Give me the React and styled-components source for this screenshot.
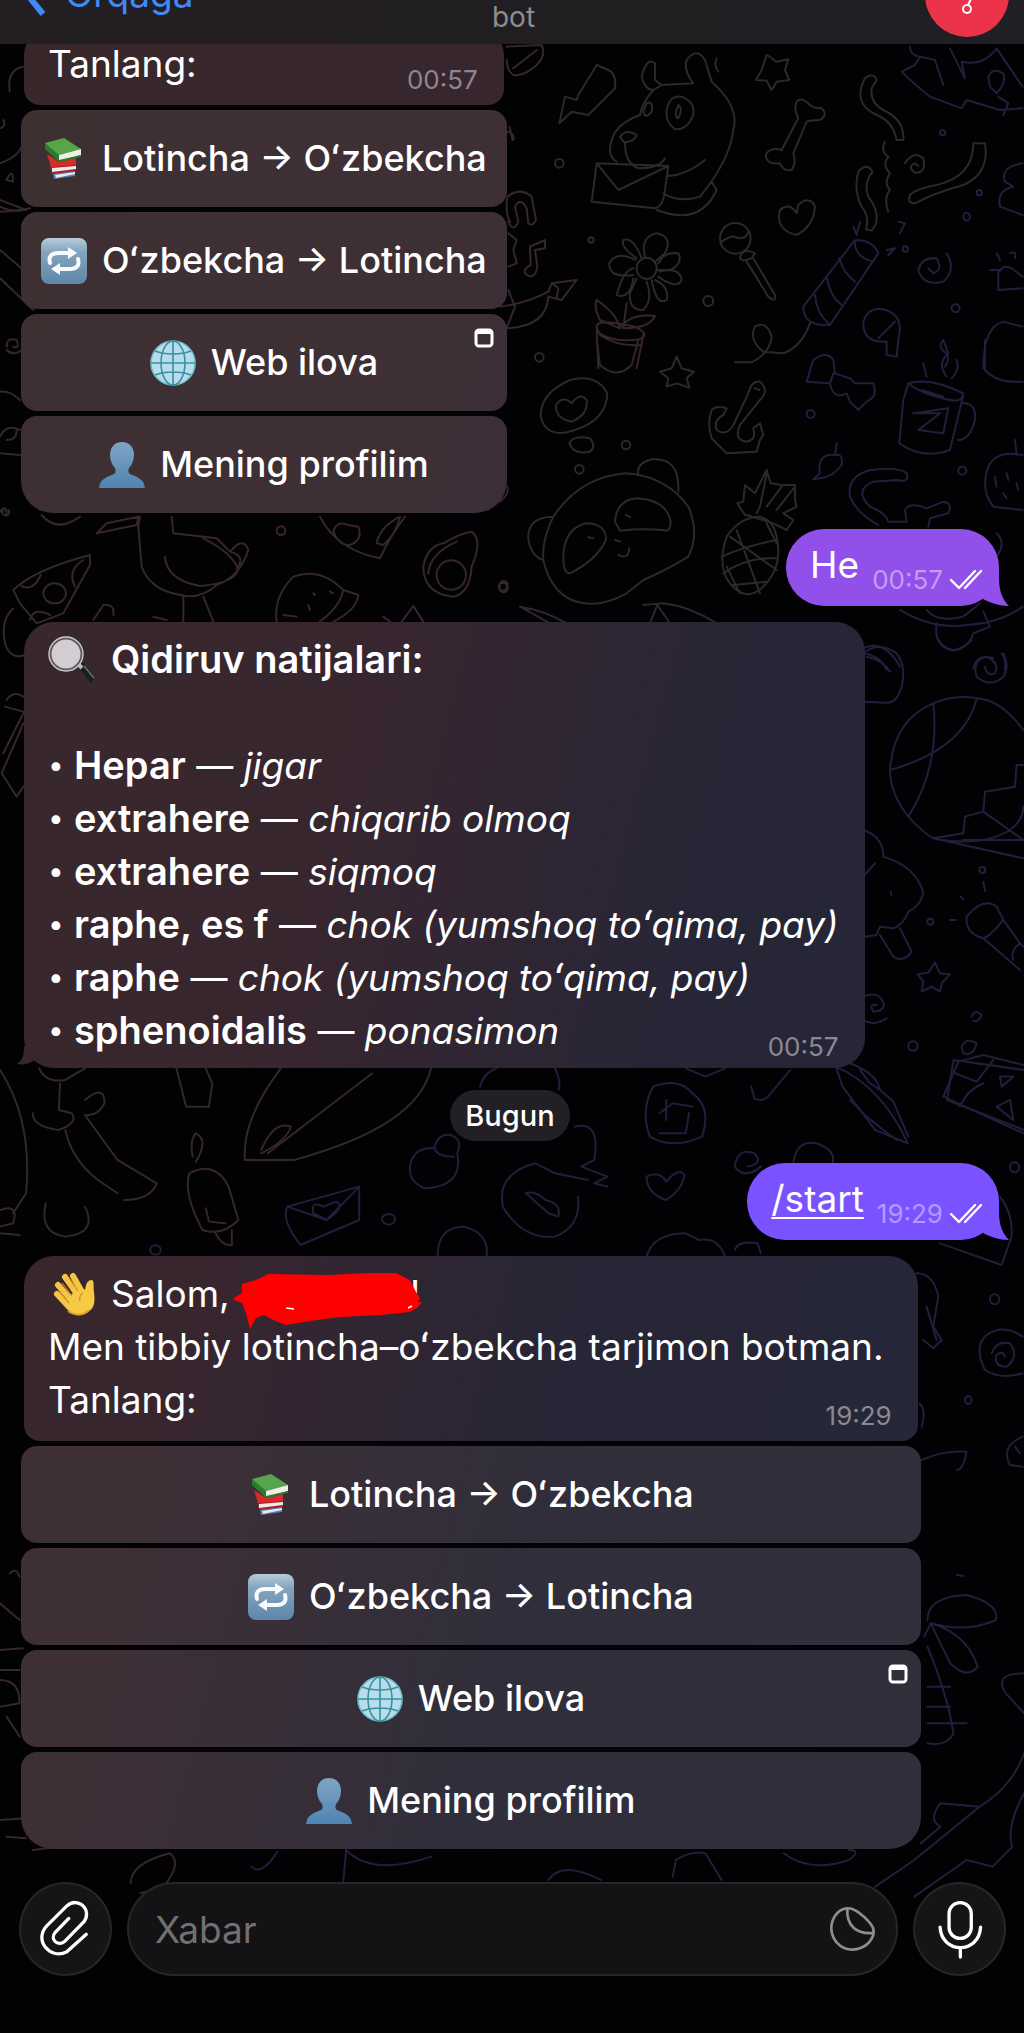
import React from "react";
import styled, { createGlobalStyle } from "styled-components";

const GlobalStyle = createGlobalStyle`
  * {
    box-sizing: border-box;
  }
  body {
    margin: 0;
    background-color: #020103;
    color: white;
    font-family: Inter, "Noto Sans", sans-serif;
    font-size: 37px;
    line-height: 53px;
  }
  button, input {
    font: inherit;
    color: inherit;
    border: none;
    padding: 0;
  }
`;

const Page = styled.div`
  position: relative;
  height: 100vh;
  display: flex;
  flex-direction: column;
  overflow: hidden;
`;

const Wallpaper = styled.svg`
  position: absolute;
  inset: 0;
  width: 100%;
  height: 100%;
  fill: none;
  stroke-width: 2;
  stroke-linecap: round;
  stroke-linejoin: round;

  path {
    vector-effect: non-scaling-stroke;
  }
`;

const Header = styled.header`
  position: relative;
  flex: none;
  height: 44px;
  padding: 0 15px 0 18px;
  display: grid;
  grid-template-columns: 1fr auto 1fr;
  grid-template-rows: 44px;
  align-items: end;
  overflow: hidden;
  background: linear-gradient(to right, #231f22, #211e21 60%, #1f1f24);
`;

const BackButton = styled.button`
  justify-self: start;
  display: flex;
  align-items: flex-end;
  gap: 17px;
  margin-bottom: 28px;
  line-height: 44px;
  background: none;
  color: #3f8af7;
  cursor: pointer;
`;

const Subtitle = styled.span`
  margin-bottom: 9px;
  font-size: 28px;
  line-height: 36px;
  color: #8f8d90;
`;

const Avatar = styled.button`
  justify-self: end;
  width: 84px;
  height: 84px;
  margin-bottom: 7px;
  border-radius: 50%;
  background-color: #ec3349;
  cursor: pointer;
`;

const Chat = styled.main`
  position: relative;
  flex: 1;
  min-height: 0;
  padding: 0 25px 33px 21px;
  display: flex;
  flex-direction: column;
  justify-content: flex-end;
  align-items: flex-start;
  gap: 16px;
  overflow: hidden;
`;

const Group = styled.section`
  flex: none;
  min-width: ${(props) => (props.$wide ? "92%" : "0")};
  display: flex;
  flex-direction: column;
  gap: 5px;
`;

const Bubble = styled.div`
  position: relative;
  margin: 0 3px;
  padding: ${(props) => (props.$attached ? "11px 26px 15px 24px" : "11px 26px 11px 24px")};
  border-radius: ${(props) => (props.$attached ? "30px 30px 16px 16px" : "30px")};
  background: linear-gradient(105deg, #38282a, #38262f 35%, #272536 60%, #24283a)
    fixed;
`;

const Line = styled.p`
  margin: 0;
  min-height: 53px;
  display: flex;
  align-items: center;
  gap: 15px;
  white-space: pre;
`;

const Title = styled(Line)`
  font-size: 38px;
  font-weight: 600;
`;

const LastLine = styled.div`
  display: flex;
  gap: 24px;
`;

const Time = styled.time`
  align-self: flex-end;
  margin: 0 0 -8px auto;
  font-size: 26px;
  line-height: 36px;
  color: #8d8792;
`;

const Results = styled.ul`
  margin: 53px 0 0;
  padding: 0;
  list-style: none;

  li {
    display: flex;
    gap: 12px;
    white-space: nowrap;
  }
  b {
    font-size: 38px;
    font-weight: 600;
  }
`;

const Dot = styled.span`
  width: 14px;
  font-size: 28px;
  text-align: center;
`;

const Redacted = styled.span`
  position: relative;
  display: inline-block;
  width: 180px;
  height: 36px;

  svg {
    position: absolute;
    left: 4px;
    top: 1px;
  }
`;

const KeyButton = styled.button`
  position: relative;
  height: 97px;
  padding: 0 20px;
  display: flex;
  align-items: center;
  justify-content: center;
  gap: 15px;
  border-radius: 16px;
  font-size: 36px;
  font-weight: 500;
  white-space: nowrap;
  background: linear-gradient(105deg, #3d3030, #3e2f36 35%, #302e3b 60%, #302f3a)
    fixed;
  cursor: pointer;

  &:last-child {
    border-radius: 16px 16px 32px 32px;
  }
`;

const WebBadge = styled.svg`
  position: absolute;
  top: 14px;
  right: 13px;
`;

const Outgoing = styled.div`
  position: relative;
  flex: none;
  align-self: flex-end;
  height: 77px;
  padding: 9px 14px 0 24px;
  display: flex;
  align-items: flex-start;
  gap: 13px;
  border-radius: 38px;
  background-color: ${(props) => props.$color};

  a {
    color: white;
    text-decoration-thickness: 2px;
    text-underline-offset: 5px;
  }
`;

const Receipt = styled.span`
  display: flex;
  align-items: center;
  gap: 6px;
  margin-top: 24px;
  line-height: 36px;

  time {
    margin: 0;
    color: ${(props) => props.$color};
  }
`;

const Tail = styled.svg`
  position: absolute;
  right: -10px;
  bottom: 0;
`;

const LeftTail = styled.svg`
  position: absolute;
  left: -7px;
  bottom: 0;
`;

const DatePill = styled.div`
  flex: none;
  align-self: center;
  margin: 6px 0;
  padding: 0 15px;
  border-radius: 26px;
  font-size: 29px;
  font-weight: 500;
  line-height: 51px;
  background-color: #232025;
`;

const Composer = styled.form`
  position: relative;
  flex: none;
  display: flex;
  gap: 15px;
  padding: 0 18px 57px 19px;
`;

const RoundButton = styled.button`
  flex: none;
  width: 93px;
  height: 94px;
  display: grid;
  place-items: center;
  border: 2px solid #262527;
  border-radius: 50%;
  background-color: #151416;
  cursor: pointer;
`;

const Field = styled.div`
  flex: 1;
  height: 94px;
  padding: 0 18px 0 26px;
  display: flex;
  align-items: center;
  border: 2px solid #262527;
  border-radius: 47px;
  background-color: #131214;
`;

const Input = styled.input`
  flex: 1;
  min-width: 0;
  background: none;
  outline: none;

  &::placeholder {
    color: #727073;
    opacity: 1;
  }
`;

const StickerButton = styled.button`
  display: grid;
  background: none;
  cursor: pointer;
`;

const LEFT = "#35262d";
const MIDDLE = "#2c282c";
const RIGHT = "#211f3b";

// Wallpaper doodles, grouped by the patch of the canvas they are drawn on.
const doodles = [
  {
    color: LEFT,
    at: "translate(500 40) scale(.3333)",
    d: `M20 20L125 15Q140 45 110 75Q70 110 40 105Q20 90 20 60M40 85L110 30
      M40 300Q45 280 22 275M25 545Q40 580 55 545L45 500Q60 470 80 505L85 550Q100 560 108 540L95 470Q60 440 22 470Q15 520 30 545
      M80 705Q105 720 112 680L105 630L135 625L135 600L90 620L92 675Q65 690 80 705M25 580L50 600L40 630L50 670L25 680
      M0 800Q80 790 145 755L155 730L230 720L185 780L145 770Q140 860 20 865L45 800L25 750M155 730L175 745L170 775
      M290 780Q280 800 300 840L360 865Q350 820 290 780M360 865Q390 820 465 828Q450 865 370 865L380 790
      M290 860Q290 840 350 850Q430 860 433 885Q430 905 360 900Q290 890 290 860L295 985M430 885L410 985M300 885Q350 920 425 915`,
  },
  {
    color: MIDDLE,
    at: "translate(500 40) scale(.3333)",
    d: `M290 75L235 165L230 180L195 170L178 250L215 215L265 225L345 145Q350 100 325 90Z
      M485 135L465 120L465 70Q440 50 425 110Q435 150 460 150L485 135L580 130Q550 90 560 60Q590 20 615 60L635 125Q720 200 700 270Q690 360 600 470Q540 490 490 460
      M460 150Q425 190 420 225Q350 250 335 300Q320 350 350 365M360 290Q380 265 410 285Q400 310 370 305ZM375 310Q375 370 415 385Q480 385 495 355
      M440 190Q460 180 455 215Q435 240 430 215ZM500 210Q510 160 550 172Q590 190 578 230Q560 270 525 268Q495 245 500 210ZM535 195Q550 205 535 235Q520 230 535 195
      M290 370L505 378L495 450Q490 500 465 505L275 485ZM290 370L355 450L505 378M505 408Q560 405 615 360M470 510Q600 560 650 450L635 425
      M650 55Q640 75 655 95M800 45L810 50L828 65L865 58L855 90L868 120L830 125L815 150L800 122L768 120L785 90Z
      M165 370a13 13 0 1 0 26 0a13 13 0 1 0-26 0M890 185Q900 170 925 190Q935 205 965 205Q985 225 960 240Q930 240 920 245L880 340Q890 370 875 390Q850 395 840 370Q800 375 797 345Q810 320 845 330L895 235Q880 205 890 185Z
      M1095 115Q1120 95 1130 120L1115 145Q1110 190 1150 210Q1215 240 1210 300L1190 300Q1180 245 1130 225Q1055 190 1095 115Z
      M1075 395Q1100 365 1118 395Q1090 430 1105 470Q1150 530 1115 572L1098 568Q1110 530 1085 500Q1060 450 1075 395Z
      M1155 305Q1140 335 1165 350Q1145 375 1170 400Q1150 430 1170 450Q1150 475 1165 515
      M1215 370Q1240 330 1270 355Q1280 400 1245 398Q1220 380 1245 370L1255 378M1420 310L1455 310Q1470 400 1390 435Q1300 460 1245 490Q1220 490 1230 465Q1250 445 1310 435Q1420 410 1420 310Z
      M890 520Q870 485 840 510Q825 570 890 585Q940 560 945 500Q930 465 895 495Z
      M660 595a46 46 0 1 0 92 0a46 46 0 1 0-92 0M665 605Q700 580 715 595Q740 595 745 575M720 655Q720 635 745 632L765 640L755 655L730 662ZM740 665L805 770Q830 790 825 765L760 655
      M400 685Q370 690 350 765Q390 780 400 715M400 705Q325 715 328 670Q350 630 405 660M410 655Q360 620 370 600Q400 590 425 655M435 650Q420 590 470 580Q520 590 495 640L465 665M475 670Q490 635 535 640Q550 670 510 690L475 690
      M480 695Q540 680 545 720Q530 750 475 710M465 720Q510 740 500 780Q470 800 455 720M440 725Q460 780 430 810Q385 810 390 760L410 715M410 685a30 32 0 1 0 60 0a30 32 0 1 0-60 0
      M610 783a15 15 0 1 0 30 0a15 15 0 1 0-30 0M105 952a13 13 0 1 0 26 0a13 13 0 1 0-26 0M265 600a8 8 0 1 0 16 0a8 8 0 1 0-16 0
      M705 967L755 967Q810 940 815 890Q800 840 765 860Q745 900 790 935L850 940Q905 920 930 850`,
  },
  {
    color: RIGHT,
    at: "translate(500 40) scale(.3333)",
    d: `M1065 600L910 800Q910 860 990 855L1135 640Q1120 600 1065 600ZM1065 600Q1060 650 1120 665M1018 655Q1030 700 1065 725M980 710Q990 770 1025 795M945 765Q950 820 985 850
      M1060 560L1070 585L1080 545M1195 545L1215 550L1200 580M1160 630L1185 625L1165 645M1208 627a8 8 0 1 0 16 0a8 8 0 1 0-16 0
      M1230 20Q1230 45 1260 50L1245 75L1205 95Q1240 130 1290 170L1385 205L1400 180L1500 210L1568 205M1260 50L1305 60L1330 135M1350 25L1395 115L1385 65Q1450 80 1490 25L1568 140M1465 110Q1480 80 1510 100Q1520 130 1490 160L1470 140Z
      M1495 170L1525 190L1510 225M1320 278a8 8 0 1 0 16 0a8 8 0 1 0-16 0M1430 458a8 8 0 1 0 16 0a8 8 0 1 0-16 0M1390 530a10 12 0 1 0 20 0a10 12 0 1 0-20 0
      M1340 640Q1370 690 1330 725Q1270 740 1255 690Q1265 650 1310 655Q1330 690 1300 700L1285 685M1568 370Q1500 380 1515 425L1540 440Q1490 450 1500 500L1568 525
      M1470 690L1500 690M1490 640L1500 660M1530 640Q1550 630 1545 655M1495 700Q1510 670 1535 685L1568 710M1495 700L1495 750L1568 745
      M1090 850Q1100 800 1150 808Q1200 820 1200 870L1195 900L1190 950L1160 945L1160 905Q1090 910 1090 850ZM1135 895L1185 845M1330 900Q1310 920 1340 940Q1350 960 1335 980
      M1450 985Q1450 860 1510 845L1568 860M1355 805a12 12 0 1 0 24 0a12 12 0 1 0-24 0`,
  },
  {
    color: MIDDLE,
    at: "translate(500 340) scale(.3333)",
    d: `M290 0L300 75Q350 120 395 75L415 0M480 95L515 85L530 50L545 85L582 95L560 115L568 143L530 130L500 140L505 115Z
      M225 270Q320 240 322 160Q290 100 210 120Q120 160 122 230Q140 300 225 270ZM215 190Q190 165 168 195Q165 235 215 245Q265 225 260 180Q240 155 215 190M208 310Q220 285 270 295Q290 320 270 335Q220 345 208 310
      M365 315a13 13 0 1 0 26 0a13 13 0 1 0-26 0M225 388a13 13 0 1 0 26 0a13 13 0 1 0-26 0M0 740a12 12 0 1 0 22 0a12 12 0 1 0-22 0
      M130 660Q150 750 215 780Q290 810 380 760L430 720Q500 690 565 650Q600 580 565 500Q500 410 380 400Q240 410 160 530Q125 600 130 660ZM415 400Q410 370 455 358Q540 350 535 455M160 530Q80 530 85 600Q95 650 130 660
      M190 655Q190 570 255 550Q320 550 318 600Q290 660 210 700Q190 700 190 655ZM345 545Q350 480 410 475Q500 480 512 545Q510 580 490 570Q420 565 360 572ZM265 592L280 595M378 525L390 532M345 600L360 605M355 645Q385 660 388 625
      M635 210Q650 195 680 205L670 225Q640 240 650 270Q680 290 700 255L745 160Q755 120 780 125Q810 150 780 180L720 255Q700 300 740 305Q770 300 760 265L780 250L790 285L780 300L770 335L680 340L635 295Q620 250 635 210ZM765 145L778 150
      M780 530Q720 530 680 590Q650 680 690 730Q740 790 790 740Q850 680 830 590Q820 540 780 530ZM690 590L830 690M665 650Q730 620 830 600M670 700Q740 650 830 655M710 570L780 760M800 550L830 610M680 680L720 760M700 735L800 725
      M735 525L712 490L730 485L735 435L765 460L800 390L812 430L845 435L885 435L885 480L890 500L850 520L880 540L860 570L820 550L740 525M800 400L780 500L770 520M845 440L800 500M885 440L830 510
      M0 485Q30 460 22 440M60 800L150 850M60 800Q130 810 200 850M450 850L472 795L510 850M430 795L490 790Q570 800 650 850`,
  },
  {
    color: RIGHT,
    at: "translate(500 340) scale(.3333)",
    d: `M940 60Q980 30 1000 60L1005 100L1050 115L1065 130L1120 130Q1135 170 1100 185L1075 210L1050 185L1040 160Q1000 180 990 130L920 125ZM990 130L1000 100
      M920 222a12 12 0 1 0 24 0a12 12 0 1 0-24 0M1375 392a12 12 0 1 0 24 0a12 12 0 1 0-24 0M1010 310L1005 345Q1030 340 1025 375Q1000 410 960 415L940 418L960 400Q950 340 1005 345
      M1225 130Q1290 110 1390 160Q1390 190 1340 178Q1260 160 1225 130L1210 180L1198 310Q1270 360 1350 330L1390 165M1390 190Q1430 190 1425 240Q1410 300 1375 300M1265 150L1330 170
      M1240 220L1345 205L1330 280L1255 270L1320 220L1240 220M1270 70L1280 110M1330 0L1345 40Q1310 70 1340 110M1370 60Q1380 90 1355 115
      M1455 0L1455 90Q1490 130 1568 125M1220 400Q1230 430 1190 420L1120 425Q1060 450 1110 500Q1160 520 1165 545L1220 545L1215 510Q1230 485 1280 505L1330 485Q1360 490 1345 520L1290 535L1285 560M1220 400Q1200 380 1110 390Q1040 410 1050 470Q1070 520 1135 555
      M1568 345Q1490 330 1465 380Q1440 450 1480 500L1568 510M1485 410L1490 440M1520 400L1525 420M1510 460L1520 475M1550 430L1555 450M1545 300L1550 345
      M1490 580Q1520 610 1490 650M1200 810Q1300 870 1400 855Q1500 850 1568 800M1310 850Q1300 920 1360 932Q1410 920 1420 880L1470 860L1450 815M1280 810Q1310 850 1390 830L1440 790
      M1080 930Q1150 890 1200 980M1085 940Q1140 945 1160 990M1420 985Q1430 940 1480 955M1505 940Q1520 960 1515 990`,
  },
  {
    color: RIGHT,
    at: "translate(850 640) scale(.3333)",
    d: `M35 45Q80 0 140 40Q170 80 155 140Q140 190 110 188L40 185M50 50Q100 60 120 95M265 0Q310 60 365 0M460 40Q480 80 460 110Q420 145 380 110Q365 60 410 50Q450 70 435 100Q410 110 405 80
      M120 390Q130 240 250 190Q320 160 400 178Q460 190 520 270M120 390Q120 460 175 530Q230 590 260 598Q400 620 480 570Q520 540 520 500M120 390Q340 330 380 178M175 530Q270 380 250 190
      M520 375L500 375L495 440L405 455L400 515L345 530L340 580L250 595L520 655M340 600L520 600M400 515L520 600
      M40 570Q100 590 100 650Q200 680 220 760Q210 800 175 815Q160 855 130 865L90 860L80 885L45 890M90 885L130 950Q160 970 185 935L150 865M75 670L35 715M122 755L124 765
      M388 690a9 9 0 1 0 18 0a9 9 0 1 0-18 0M232 845a9 9 0 1 0 18 0a9 9 0 1 0-18 0M300 840L318 840M332 770L340 778M400 725L405 752
      M350 830Q400 770 440 800L460 840L510 910L520 920M350 830Q345 880 400 895L510 990M400 895Q420 890 460 840M490 960Q480 930 510 910
      M255 968L270 1000L300 1003L275 1030L270 1055L245 1040L215 1055L220 1025L203 1003L235 998Z
      M40 1070Q90 1050 102 1095Q100 1115 70 1115Q55 1090 80 1095M40 1140Q70 1160 110 1135M365 1130Q375 1105 395 1125Q385 1150 370 1142M175 1218a14 14 0 1 0 28 0a14 14 0 1 0-28 0M335 1220Q350 1190 380 1210Q370 1250 340 1240Z
      M325 1265L280 1370L520 1480M325 1265L400 1245L520 1275M315 1300L380 1325L430 1260M330 1400Q350 1350 400 1330M450 1310L490 1310L455 1340ZM440 1400L480 1380L490 1440Z
      M0 1270Q80 1300 90 1350L130 1385L175 1490M0 1380L50 1430L100 1470L140 1500M90 1350L60 1330L30 1290`,
  },
  {
    color: LEFT,
    at: "translate(0 500) scale(.3333)",
    d: `M420 50L415 80L425 200Q450 270 540 285Q600 300 650 255Q720 230 745 150Q735 120 710 135L690 155L650 115L520 100L515 50M495 170Q500 240 600 258Q700 250 715 210Q700 160 610 115M690 155Q740 170 710 205M550 285L550 365M610 290L640 365M290 100L410 75L415 50L320 70Z
      M125 45Q170 100 240 50M830 92a13 13 0 1 0 26 0a13 13 0 1 0-26 0M1497 260a12 12 0 1 0 24 0a12 12 0 1 0-24 0
      M960 50Q1010 150 1140 175Q1170 110 1215 50M1045 75Q1010 60 1000 95Q1020 140 1050 135Q1090 120 1075 80ZM1130 130Q1140 80 1200 50Q1190 100 1150 135Z
      M1270 200Q1280 140 1330 130Q1380 100 1415 95Q1450 120 1415 200Q1410 280 1360 290Q1270 280 1270 200ZM1310 225a44 44 0 1 0 88 0a44 44 0 1 0-88 0M1285 220Q1290 160 1370 125
      M40 270Q100 210 270 165L270 195L190 340L110 370L60 310ZM65 258Q100 275 122 225M130 280a34 30 0 1 0 68 0a34 30 0 1 0-68 0M90 360Q100 320 150 345M250 180Q200 210 225 260
      M40 325Q0 360 15 430Q30 480 75 465M280 360L310 315Q345 310 340 345M830 365Q820 290 880 230Q960 200 1030 270L1075 285Q1070 330 1000 365M1030 270Q1020 320 960 365M940 280L945 285M990 275L1000 280M925 315L930 330M850 345L890 350
      M1150 350L1170 365M1205 365L1240 318L1270 365M460 350L500 360M20 600Q40 570 70 590M15 620L70 635M70 640L10 760M70 670L5 820L50 890L70 860M10 30a10 10 0 1 0 15 0`,
  },
  {
    color: LEFT,
    at: "translate(0 820) scale(.6531 .3333)",
    d: `M270 745L285 860L320 860L325 790L315 745M430 745Q370 900 375 1020L450 1020Q640 920 660 745M570 760L410 1000M400 990Q420 900 445 920Q440 960 400 1000
      M0 750Q50 900 40 1120L20 1180M60 745Q70 790 100 780L130 745M50 880Q50 920 90 930Q120 910 110 880L90 870L92 790M130 840Q160 790 160 850Q150 890 130 885L180 1020L240 1090Q230 1140 190 1140M100 930Q110 1020 150 1080L180 1120M130 1160Q150 1240 100 1250Q60 1240 70 1150M0 1170Q30 1150 20 1210L0 1220M0 1240L30 1245
      M295 1010Q290 960 300 940Q320 960 300 1025M290 1060Q330 1020 350 1100L365 1200Q340 1250 310 1230Q280 1120 290 1060M330 1240Q340 1280 355 1275L355 1230M315 1165L320 1205L345 1210`,
  },
  {
    color: RIGHT,
    at: "translate(0 820) scale(.6531 .3333)",
    d: `M440 1160L550 1100L550 1200L460 1275Q430 1200 440 1160M440 1160L500 1200L550 1100M495 1160Q475 1140 480 1180L500 1200Q530 1160 515 1145Z
      M630 1020Q640 980 665 985Q670 940 690 945Q710 960 700 1000Q710 1100 650 1105Q620 1080 630 1020M665 985Q670 1010 695 1010M585 1198a10 16 0 1 0 20 0a10 16 0 1 0-20 0
      M735 800Q740 760 760 745M850 745Q860 790 855 810M820 1030Q760 1060 770 1160Q800 1260 850 1250Q890 1220 885 1130M820 1030L850 1060L900 1080M805 1120Q820 1110 835 1140Q860 1150 855 1190L840 1180L805 1120M880 920Q920 900 910 1020L890 1040L930 1070L910 1090L930 1100
      M670 1310Q670 1220 710 1220Q750 1240 745 1310M995 950Q980 870 1000 800Q1040 770 1060 820Q1090 860 1075 950Q1030 990 995 950M1010 880L1030 850L1060 860M1010 940L1050 940L1055 880M1020 840L1020 900
      M1020 1140Q990 1120 990 1070Q1010 1050 1020 1085Q1040 1040 1048 1065Q1045 1110 1020 1140M1165 1040Q1140 1080 1125 1040Q1130 980 1155 1000Q1170 1030 1145 1040M1215 1025Q1220 960 1250 970Q1280 990 1275 1030
      M990 1310Q1000 1240 1050 1240L1070 1260Q1100 1250 1110 1310M1125 1290Q1130 1260 1160 1270L1165 1300M1150 800L1155 835Q1170 850 1180 820L1210 750M1280 740Q1350 800 1390 970L1340 930L1290 800ZM1460 720L1450 840L1568 930M1460 720L1568 750
      M1050 745L1080 770L1110 745M230 1290a8 14 0 1 0 16 0a8 14 0 1 0-16 0`,
  },
  {
    color: RIGHT,
    at: "translate(500 1140) scale(.3333)",
    d: `M1250 400Q1300 400 1315 470L1300 560L1325 600L1300 625L1270 600M1280 500L1310 600M1470 478a14 15 0 1 0 28 0a14 15 0 1 0-28 0M1530 82a14 15 0 1 0 28 0a14 15 0 1 0-28 0M1395 780a10 12 0 1 0 20 0a10 12 0 1 0-20 0
      M1568 700Q1500 720 1455 690Q1420 620 1460 585Q1510 550 1568 590M1475 640Q1490 600 1530 610Q1560 650 1520 680Q1480 680 1490 645Q1510 630 1515 650M1500 170Q1540 220 1535 290L1505 375L1320 310M1568 890Q1500 920 1530 975L1568 980M1545 920L1560 940M1265 960Q1330 930 1400 935Q1390 990 1370 990M1258 790Q1280 810 1265 860`,
  },
  {
    color: RIGHT,
    at: "translate(0 1560) scale(.6531 .3333)",
    d: `M1420 180Q1420 110 1480 105Q1530 130 1525 180Q1480 220 1425 190L1415 230M1425 190Q1480 220 1497 320Q1480 360 1455 310L1425 190M1420 260Q1450 400 1460 520Q1450 560 1420 550M1420 380L1455 380M1420 440L1455 440M1420 490L1480 490
      M1568 580Q1550 680 1500 740L1440 730Q1420 780 1440 800L1410 850M1500 740L1400 900L1340 980M1568 700Q1540 800 1550 860L1520 920L1480 900L1400 1010M1568 340Q1520 340 1540 400L1568 460
      M1200 880Q1240 940 1300 900Q1320 870 1300 870M1030 950L1035 900Q1060 870 1080 880L1105 960M840 960Q860 900 920 960M525 980L530 870M530 870Q570 950 660 890M385 920Q400 950 425 875M1465 45L1475 48`,
  },
  {
    color: LEFT,
    at: "translate(0 1560) scale(.6531 .3333)",
    d: `M200 970Q200 910 260 880Q280 910 250 980L215 1000M0 330L30 330M15 40Q25 20 30 50M0 130L30 180M0 270L35 265M0 360Q30 360 30 430L0 440M10 470L30 530M0 780L40 775M10 830L40 835M50 870L90 860`,
  },
  {
    color: LEFT,
    at: "translate(0 0) scale(.6531 .3333)",
    d: `M15 275Q10 210 35 200M0 385Q10 380 5 360M0 490Q30 470 35 430M10 540Q20 500 20 545ZM0 600L40 630L0 635M780 380L785 420`,
  },
  {
    color: LEFT,
    at: "translate(0 200) scale(.3333)",
    d: `M0 20Q40 40 90 25M0 150L70 210M0 235L100 330M20 440Q20 410 50 420Q60 450 40 440M20 450Q40 470 65 450M0 575Q30 570 60 600M0 710Q20 670 60 690M20 720Q50 720 50 690M0 760L60 765M0 935Q20 910 20 945`,
  },
];

const Books = () => (
  <svg width="46" height="46" viewBox="0 0 46 46" aria-hidden="true">
    <path d="M12 37l22-2v5l-21 3z" fill="#5d7db3" />
    <path d="M14 39l20-3v2l-19 4z" fill="#e5e8ee" />
    <path d="M9 29l26-1v7l-24 3z" fill="#a71f26" />
    <path d="M11 32l24-2v3l-24 3z" fill="#eee9e8" />
    <path d="M6 18l12 8 17-4v7l-25 2z" fill="#d42c2d" />
    <path d="M4 7v6l14 13V18z" fill="#2c7a2d" />
    <path d="M4 7l19-5 17 11-22 6z" fill="#57a54b" />
    <path d="M18 19l22-6v6l-22 6z" fill="#eef0e8" />
    <path d="M18 24l22-5v2l-22 5z" fill="#2c7a2d" />
  </svg>
);

const Repeat = () => (
  <svg width="46" height="46" viewBox="0 0 46 46" aria-hidden="true">
    <defs>
      <linearGradient id="key" x1="0" y1="0" x2="0" y2="1">
        <stop offset="0" stopColor="#b7ccd9" />
        <stop offset=".3" stopColor="#84a5bf" />
        <stop offset="1" stopColor="#5d86a8" />
      </linearGradient>
    </defs>
    <rect width="46" height="46" rx="8" fill="url(#key)" />
    <g fill="none" stroke="#f7fbff" strokeWidth="4" strokeLinecap="round">
      <path d="M9 25c-2-7 2-10 8-10h12" />
      <path d="M37 21c2 7-2 10-8 10H18" />
    </g>
    <path d="M27 9l9 6-9 6zM19 25l-9 6 9 6z" fill="#f7fbff" />
  </svg>
);

const Globe = () => (
  <svg width="46" height="46" viewBox="0 0 46 46" aria-hidden="true">
    <circle cx="23" cy="23" r="22" fill="#b9dcec" />
    <g fill="none" stroke="#35939f" strokeWidth="1.6">
      <circle cx="23" cy="23" r="22" stroke="#71bfca" />
      <ellipse cx="23" cy="23" rx="12" ry="22" />
      <path d="M23 1v44M1 23h44M5 11c10 4 26 4 36 0M5 35c10-4 26-4 36 0" />
    </g>
  </svg>
);

const Bust = () => (
  <svg width="46" height="46" viewBox="0 0 46 46" aria-hidden="true">
    <defs>
      <linearGradient id="bust" x1="0" y1="0" x2="0" y2="1">
        <stop offset="0" stopColor="#7fa5c4" />
        <stop offset="1" stopColor="#4f84b1" />
      </linearGradient>
    </defs>
    <path
      d="M23 0c8 0 12 6 12 13 0 5-2 10-5 13-1 2-1 5 1 6 6 3 14 4 15 14H0c1-10 9-11 15-14 2-1 2-4 1-6-3-3-5-8-5-13C11 6 15 0 23 0z"
      fill="url(#bust)"
    />
  </svg>
);

const Magnifier = () => (
  <svg width="48" height="48" viewBox="0 0 48 48" aria-hidden="true">
    <path d="M29 30l5-4 13 15-4 6z" fill="#181e21" />
    <path d="M36 30l10 12" stroke="#6c7578" strokeWidth="1.4" />
    <path d="M29 27l5 5" stroke="#b9b9bb" strokeWidth="4" />
    <circle cx="18" cy="18" r="16" fill="#d3cdd2" stroke="#5c595f" strokeWidth="3" />
    <circle cx="18" cy="18" r="17" fill="none" stroke="#c9c6ca" strokeWidth="1.4" />
  </svg>
);

const Wave = () => (
  <svg width="48" height="48" viewBox="0 0 48 48" aria-hidden="true">
    <g fill="none" stroke="#f6c445" strokeWidth="6" strokeLinecap="round">
      <path d="M10 15l13 15M17 7l12 17M9 24l12 13M25 6l9 16" />
    </g>
    <path
      d="M16 30l17-13 4 3c1-4 1-9 6-10 4 0 2 5 3 12 1 9 1 16-6 20-7 5-15 3-20-2z"
      fill="#f8c944"
    />
    <path
      d="M14 13l10 13M21 8l9 13M12 22l9 11M35 23c-3 2-4 5-3 8"
      fill="none"
      stroke="#cf9122"
      strokeWidth="1.2"
    />
    <path d="M20 41c7 5 15 5 21-1" fill="none" stroke="#dd9d26" strokeWidth="2" />
  </svg>
);

const Scribble = () => (
  <svg width="192" height="58" viewBox="0 0 192 58" aria-hidden="true">
    <path
      d="M0 26l8-5v-9l14-4L34 2l60 1 40-2h28l14 7 6 12 4 6-3 4h5l-4 5-8 5-30 3-40 2-30 4-24 4-13-5-9-5-8 3-6 11-4-16-4-10-8-3z"
      fill="#fe0000"
    />
    <path d="M52 36l8 1M174 36l4-2" stroke="#fff" strokeWidth="1.5" />
  </svg>
);

const Checks = () => (
  <svg width="36" height="22" viewBox="0 0 36 22" aria-hidden="true">
    <path
      d="M2 11l8 8L26 2M16 19L32 2"
      fill="none"
      stroke="white"
      strokeWidth="2.4"
      strokeLinecap="round"
      strokeLinejoin="round"
    />
  </svg>
);

const keys = [
  { label: "Lotincha → Oʻzbekcha", Icon: Books },
  { label: "Oʻzbekcha → Lotincha", Icon: Repeat },
  { label: "Web ilova", Icon: Globe, web: true },
  { label: "Mening profilim", Icon: Bust },
];

const results = [
  { term: "Hepar", meaning: "jigar" },
  { term: "extrahere", meaning: "chiqarib olmoq" },
  { term: "extrahere", meaning: "siqmoq" },
  { term: "raphe, es f", meaning: "chok (yumshoq toʻqima, pay)" },
  { term: "raphe", meaning: "chok (yumshoq toʻqima, pay)" },
  { term: "sphenoidalis", meaning: "ponasimon", time: "00:57" },
];

const Keyboard = () =>
  keys.map(({ label, Icon, web }) => (
    <KeyButton key={label} type="button">
      <Icon />
      {label}
      {web && (
        <WebBadge width="20" height="20" viewBox="0 0 20 20" aria-hidden="true">
          <rect x="2" y="2" width="16" height="16" rx="3" fill="none" stroke="white" strokeWidth="3" />
          <path d="M3 4h14" stroke="white" strokeWidth="4" />
        </WebBadge>
      )}
    </KeyButton>
  ));

const Sent = ({ color, time, timeColor, children }) => (
  <Outgoing $color={color}>
    {children}
    <Receipt $color={timeColor}>
      <Time>{time}</Time>
      <Checks />
    </Receipt>
    <Tail width="40" height="40" viewBox="0 0 40 40" aria-hidden="true">
      <path d="M30 0v12c0 14 4 22 10 28-10 0-18-3-26-7z" fill={color} />
    </Tail>
  </Outgoing>
);

const App = () => {
  return (
    <>
      <GlobalStyle />
      <Page>
        <Wallpaper viewBox="0 0 1024 2033" preserveAspectRatio="xMidYMin slice" aria-hidden="true">
          {doodles.map(({ color, at, d }, index) => (
            <g key={index} transform={at} stroke={color}>
              <path d={d} />
            </g>
          ))}
        </Wallpaper>
        <Header>
          <BackButton type="button">
            <svg width="30" height="44" viewBox="0 0 30 44" aria-hidden="true">
              <path d="M26 4L8 21l17 21" fill="none" stroke="#3f8af7" strokeWidth="6" />
            </svg>
            <span>Orqaga</span>
          </BackButton>
          <Subtitle>bot</Subtitle>
          <Avatar type="button" aria-label="Bot">
            <svg width="84" height="84" viewBox="0 0 84 84" fill="none" stroke="white" strokeWidth="2">
              <circle cx="42" cy="56" r="4" />
              <path d="M43 52l3-6" />
            </svg>
          </Avatar>
        </Header>
        <Chat>
          <Group>
            <Bubble $attached>
              <LastLine>
                <Line>Tanlang:</Line>
                <Time>00:57</Time>
              </LastLine>
            </Bubble>
            <Keyboard />
          </Group>
          <Sent color="#9150ea" time="00:57" timeColor="#c49bf4">
            <span>He</span>
          </Sent>
          <Group>
            <Bubble>
              <Title>
                <Magnifier />
                Qidiruv natijalari:
              </Title>
              <Results>
                {results.map(({ term, meaning, time }) => (
                  <li key={term + meaning}>
                    <Dot>•</Dot>
                    <span>
                      <b>{term}</b> — <i>{meaning}</i>
                    </span>
                    {time && <Time>{time}</Time>}
                  </li>
                ))}
              </Results>
              <LeftTail width="30" height="22" viewBox="0 0 30 22" aria-hidden="true">
                <path d="M7 0c0 10-2 15-7 18 6 1 12 0 16-3l14-1z" fill="#38262f" />
              </LeftTail>
            </Bubble>
          </Group>
          <DatePill>Bugun</DatePill>
          <Sent color="#7a52ff" time="19:29" timeColor="#b29bff">
            <a href="#start">/start</a>
          </Sent>
          <Group $wide>
            <Bubble $attached>
              <Line>
                <Wave />
                <span>
                  Salom,
                  <Redacted>
                    <Scribble />
                  </Redacted>
                  !
                </span>
              </Line>
              <Line>Men tibbiy lotincha–oʻzbekcha tarjimon botman.</Line>
              <LastLine>
                <Line>Tanlang:</Line>
                <Time>19:29</Time>
              </LastLine>
            </Bubble>
            <Keyboard />
          </Group>
        </Chat>
        <Composer>
          <RoundButton type="button" aria-label="Fayl">
            <svg width="63" height="66" viewBox="100 110 190 200" fill="none" stroke="white" strokeWidth="10" strokeLinecap="round">
              <path d="M205 178l-41 42c-18 22 8 44 28 28l59-60c26-36-18-78-52-48l-60 60c-42 42 8 104 59 80q20-18 60-54" />
            </svg>
          </RoundButton>
          <Field>
            <Input type="text" placeholder="Xabar" aria-label="Xabar" />
            <StickerButton type="button" aria-label="Stiker">
              <svg width="50" height="50" viewBox="945 135 150 150" fill="none" stroke="#8f8d8f" strokeWidth="8">
                <path d="M1000 148c20-2 36 10 58 30 22 22 28 34 22 52-12 32-50 50-85 38-40-18-50-63-30-96 10-16 20-22 35-24zM1003 150c-3 50 27 76 77 72" />
              </svg>
            </StickerButton>
          </Field>
          <RoundButton type="button" aria-label="Ovozli xabar">
            <svg width="50" height="63" viewBox="1265 115 150 190" fill="none" stroke="white" strokeWidth="10" strokeLinecap="round">
              <rect x="1307" y="129" width="67" height="108" rx="33" />
              <path d="M1280 203c4 82 118 82 122 0M1341 265v28" />
            </svg>
          </RoundButton>
        </Composer>
      </Page>
    </>
  );
};

export default App;
